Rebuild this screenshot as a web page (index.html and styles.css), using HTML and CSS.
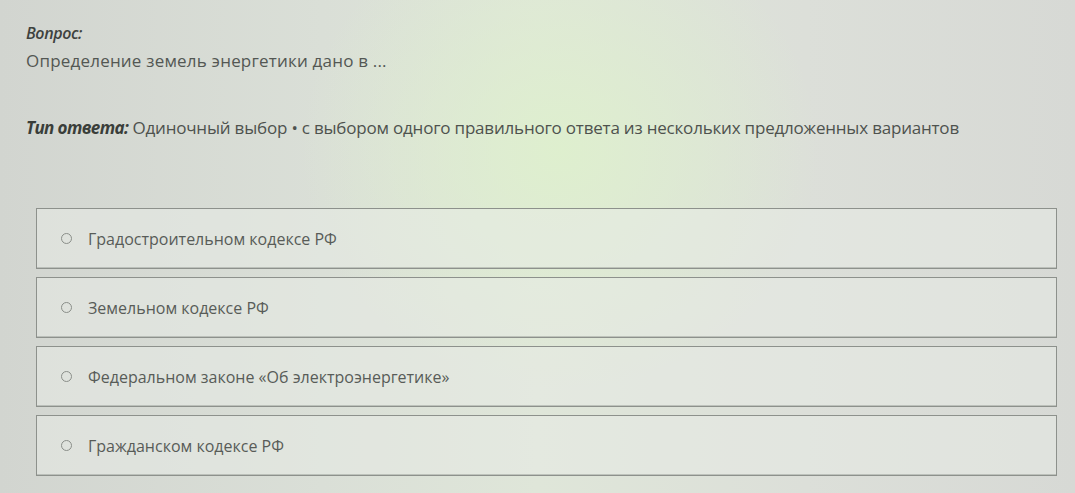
FILE: index.html
```html
<!DOCTYPE html>
<html lang="ru">
<head>
<meta charset="utf-8">
<link rel="stylesheet" href="styles.css">
</head>
<body>
<div class="page">
  <div class="question">
    <div class="label">Вопрос:</div>
    <div class="qtext">Определение земель энергетики дано в ...</div>
  </div>
  <div class="type"><span class="tlabel">Тип ответа:</span> Одиночный выбор • с выбором одного правильного ответа из нескольких предложенных вариантов</div>
  <div class="options">
    <div class="option"><span class="radio"></span><span class="otext">Градостроительном кодексе РФ</span></div>
    <div class="option"><span class="radio"></span><span class="otext">Земельном кодексе РФ</span></div>
    <div class="option"><span class="radio"></span><span class="otext">Федеральном законе «Об электроэнергетике»</span></div>
    <div class="option"><span class="radio"></span><span class="otext">Гражданском кодексе РФ</span></div>
  </div>
</div>
</body>
</html>
```
FILE: styles.css
```css
html, body {
  margin: 0;
  padding: 0;
}
body {
  width: 1075px;
  height: 493px;
  overflow: hidden;
  font-family: "Open Sans", "Noto Sans", sans-serif;
  color: #555955;
  background:
    radial-gradient(ellipse 260px 240px at 560px 150px, rgba(222, 240, 205, 0.9), rgba(222, 240, 205, 0) 100%),
    linear-gradient(90deg, #d2d5d0 0%, #dadfd7 30%, #dfe6d9 50%, #dcdfd9 75%, #d7d9d5 100%);
}
.page {
  padding: 24px 18px 0 26px;
}
.label {
  font-size: 16px;
  font-style: italic;
  font-weight: 600;
  color: #3e423e;
  letter-spacing: -0.4px;
  line-height: 18px;
}
.qtext {
  font-size: 17px;
  line-height: 20px;
  margin-top: 9px;
  color: #535753;
  letter-spacing: 0.2px;
}
.type {
  margin-top: 47px;
  font-size: 17px;
  line-height: 20px;
  color: #4e524e;
  letter-spacing: -0.2px;
}
.tlabel {
  font-style: italic;
  font-weight: 700;
  color: #3a3e3a;
  letter-spacing: -0.6px;
}
.options {
  margin-top: 70px;
  margin-left: 10px;
  display: flex;
  flex-direction: column;
  gap: 8px;
  width: 1021px;
}
.option {
  height: 59px;
  border: 1px solid #8d918c;
  background: rgba(232, 235, 229, 0.55);
  display: flex;
  align-items: center;
  padding-left: 24px;
  box-shadow: inset 0 -1px 0 rgba(120,125,120,0.35);
}
.radio {
  width: 9px;
  height: 9px;
  border: 1.5px solid #8a8e89;
  border-radius: 50%;
  margin-right: 16px;
  flex: none;
}
.otext {
  font-size: 16px;
  color: #585c58;
  line-height: 20px;
}
```
